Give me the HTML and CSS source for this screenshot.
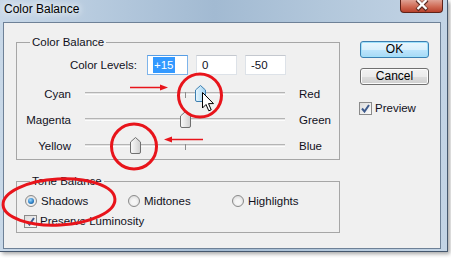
FILE: index.html
```html
<!DOCTYPE html>
<html>

<head>
    <meta charset="utf-8" />
    <title>Color Balance</title>
    <meta name="viewport" content="width=device-width, initial-scale=1">
    <link rel="stylesheet" href="styles.css">
</head>

<body>
    <svg class="defs" width="0" height="0">
        <defs>
            <linearGradient id="thumb-gray" x1="0" y1="0" x2="1" y2="0">
                <stop offset="0" stop-color="#fafafa" />
                <stop offset="0.5" stop-color="#e6e6e6" />
                <stop offset="1" stop-color="#cfcfcf" />
            </linearGradient>
            <linearGradient id="thumb-hot" x1="0" y1="0" x2="1" y2="0">
                <stop offset="0" stop-color="#eaf6fd" />
                <stop offset="0.5" stop-color="#c4e5f8" />
                <stop offset="1" stop-color="#9dcdee" />
            </linearGradient>
        </defs>
    </svg>

    <div class="window">
        <div class="titlebar">
            <div class="title">Color Balance</div>
            <div class="close-btn">
                <svg width="16" height="12" viewBox="0 0 16 12">
                    <path d="M3 0 L13 10 M13 0 L3 10" stroke="#5a2a22" stroke-width="4" />
                    <path d="M3.5 0 L12.5 9 M12.5 0 L3.5 9" stroke="#ffffff" stroke-width="2.4" />
                </svg>
            </div>
        </div>
        <div class="client">
            <div class="left-col">
                <fieldset class="group">
                    <legend>Color Balance</legend>
                    <div class="levels-row">
                        <div class="levels-label">Color Levels:</div>
                        <div class="level-input focused"><span class="selected">+15</span></div>
                        <div class="level-input">0</div>
                        <div class="level-input">-50</div>
                    </div>
                    <div class="sliders">
                        <div class="slider-row">
                            <div class="slider-left">Cyan</div>
                            <div class="track">
                                <div class="tick"></div>
                                <svg class="thumb" style="left: 110px" width="11" height="17" viewBox="0 0 11 17">
                                    <path d="M0.5 5 L5.5 0.5 L10.5 5 V15 Q10.5 16.5 9 16.5 H2 Q0.5 16.5 0.5 15 Z" fill="url(#thumb-hot)" stroke="#3c7fb1" />
                                </svg>
                            </div>
                            <div class="slider-right">Red</div>
                        </div>
                        <div class="slider-row">
                            <div class="slider-left">Magenta</div>
                            <div class="track">
                                <div class="tick"></div>
                                <svg class="thumb" style="left: 95px" width="11" height="17" viewBox="0 0 11 17">
                                    <path d="M0.5 5 L5.5 0.5 L10.5 5 V15 Q10.5 16.5 9 16.5 H2 Q0.5 16.5 0.5 15 Z" fill="url(#thumb-gray)" stroke="#707070" />
                                </svg>
                            </div>
                            <div class="slider-right">Green</div>
                        </div>
                        <div class="slider-row">
                            <div class="slider-left">Yellow</div>
                            <div class="track">
                                <div class="tick"></div>
                                <svg class="thumb" style="left: 45px" width="11" height="17" viewBox="0 0 11 17">
                                    <path d="M0.5 5 L5.5 0.5 L10.5 5 V15 Q10.5 16.5 9 16.5 H2 Q0.5 16.5 0.5 15 Z" fill="url(#thumb-gray)" stroke="#707070" />
                                </svg>
                            </div>
                            <div class="slider-right">Blue</div>
                        </div>
                    </div>
                </fieldset>

                <fieldset class="group tone">
                    <legend>Tone Balance</legend>
                    <div class="radio-row">
                        <div class="radio-item shadows"><span class="radio checked"></span>Shadows</div>
                        <div class="radio-item midtones"><span class="radio"></span>Midtones</div>
                        <div class="radio-item"><span class="radio"></span>Highlights</div>
                    </div>
                    <div class="check-row luminosity">
                        <span class="checkbox">
                            <svg width="9" height="9" viewBox="0 0 9 9"><path d="M1 4.5 L3.5 7.5 L8 1" fill="none" stroke="#3d5a8c" stroke-width="2" /></svg>
                        </span>Preserve Luminosity
                    </div>
                </fieldset>
            </div>

            <div class="right-col">
                <div class="btn btn-default">OK</div>
                <div class="btn">Cancel</div>
                <div class="check-row preview">
                    <span class="checkbox">
                        <svg width="9" height="9" viewBox="0 0 9 9"><path d="M1 4.5 L3.5 7.5 L8 1" fill="none" stroke="#3d5a8c" stroke-width="2" /></svg>
                    </span>Preview
                </div>
            </div>
        </div>
    </div>

    <svg class="cursor" width="13" height="20" viewBox="0 0 13 20">
        <path d="M0.5 0.5 L0.5 16 L4 12.5 L6.8 18.8 L9.2 17.8 L6.5 11.6 L11.5 11.6 Z" fill="#ffffff" stroke="#000000" stroke-width="1" />
    </svg>

    <svg class="marks" width="451" height="258" viewBox="0 0 451 258">
        <g fill="none" stroke="#e8141b" stroke-width="3">
            <circle cx="200" cy="95.5" r="21.5" />
            <circle cx="134" cy="146.5" r="22.5" />
            <ellipse cx="59" cy="202" rx="56" ry="23" transform="rotate(-3 59 202)" />
        </g>
        <g stroke="#e8141b" stroke-width="1.5" fill="#e8141b">
            <line x1="130" y1="87.5" x2="161" y2="87.5" />
            <path d="M168 87.5 L160 84.5 L160 90.5 Z" stroke="none" />
            <line x1="171" y1="139.5" x2="203" y2="139.5" />
            <path d="M164 139.5 L172 136.5 L172 142.5 Z" stroke="none" />
        </g>
    </svg>
</body>

</html>
```

FILE: styles.css
```css
body {
    margin: 0;
    padding: 0;
    width: 451px;
    height: 258px;
    position: relative;
    overflow: hidden;
    background-color: white;
    font-family: "Liberation Sans", Arial, sans-serif;
    font-size: 11.5px;
    color: #10101c;
}

.defs {
    position: absolute;
}

.window {
    width: 448px;
    height: 252px;
    box-sizing: border-box;
    border-right: 1px solid #46586e;
    border-bottom: 1px solid #46586e;
    background: linear-gradient(90deg, #c8d8e8 0%, #b6cade 22%, #a2bad2 48%, #b2c7db 72%, #c3d4e5 100%);
    box-shadow: 2px 2px 4px rgba(0, 0, 0, 0.35);
}

.titlebar {
    height: 22px;
    display: flex;
    justify-content: space-between;
    align-items: flex-start;
}

.title {
    padding: 2px 0 0 4px;
    font-size: 12px;
    line-height: 14px;
    color: #000;
    text-shadow: 0 0 6px #fff, 0 0 10px #fff;
}

.close-btn {
    width: 43px;
    height: 13px;
    margin-right: 4px;
    box-sizing: border-box;
    border: 1px solid #5f2218;
    border-top: none;
    border-radius: 0 0 4px 4px;
    background: linear-gradient(#e0a294, #cf6a54 55%, #b8412c);
    display: flex;
    justify-content: center;
}

.client {
    margin-left: 3px;
    width: 438px;
    height: 227px;
    box-sizing: border-box;
    border: 1px solid #6e8197;
    background-color: #f0f0f0;
    display: flex;
}

.left-col {
    width: 336px;
    box-sizing: border-box;
    padding: 12px 0 0 12px;
}

.group {
    margin: 0;
    padding: 6px 0 0 0;
    width: 324px;
    min-width: 0;
    box-sizing: border-box;
    border: 1px solid #a6a6a6;
}

.group legend {
    margin-left: 13px;
    padding: 0 2px;
    line-height: 14px;
}

.group.tone {
    margin-top: 14px;
    padding-bottom: 4px;
}

.levels-row {
    display: flex;
    align-items: center;
    height: 20px;
}

.levels-label {
    width: 120px;
    margin-right: 10px;
    text-align: right;
}

.level-input {
    width: 41px;
    height: 20px;
    box-sizing: border-box;
    margin-right: 8px;
    padding-left: 5px;
    border: 1px solid #dde2e8;
    border-top-color: #c4c8cf;
    background-color: white;
    line-height: 18px;
}

.level-input.focused {
    border-color: #7eb4ea;
    border-top-color: #569de5;
}

.selected {
    background-color: #3399ff;
    color: white;
    padding: 2px 1px;
}

.sliders {
    margin-top: 6px;
}

.slider-row {
    display: flex;
    align-items: center;
    height: 26px;
}

.slider-left {
    width: 54px;
    margin-right: 14px;
    text-align: right;
}

.track {
    position: relative;
    width: 200px;
    height: 3px;
    box-sizing: border-box;
    margin-top: -2px;
    border-top: 1px solid #b4b4b4;
    border-bottom: 1px solid #fcfcfc;
    background-color: #e4e4e4;
}

.tick {
    position: absolute;
    left: 100px;
    top: -1px;
    width: 1px;
    height: 6px;
    background-color: #8c8c8c;
}

.thumb {
    position: absolute;
    top: -8px;
}

.slider-right {
    margin-left: 14px;
}

.radio-row {
    display: flex;
    align-items: center;
    height: 14px;
    padding-left: 8px;
}

.radio-item {
    display: flex;
    align-items: center;
}

.radio-item.shadows {
    width: 103px;
}

.radio-item.midtones {
    width: 104px;
}

.radio {
    width: 12px;
    height: 12px;
    box-sizing: border-box;
    margin-right: 4px;
    border: 1px solid #8a8a8a;
    border-radius: 50%;
    background: radial-gradient(circle at 50% 60%, #f6f6f6 30%, #d2d2d2 100%);
    display: flex;
    align-items: center;
    justify-content: center;
}

.radio.checked::after {
    content: "";
    width: 6px;
    height: 6px;
    border-radius: 50%;
    background: radial-gradient(circle at 40% 35%, #9ad8ff 0%, #2f82c8 55%, #12416e 100%);
}

.check-row {
    display: flex;
    align-items: center;
    height: 14px;
}

.luminosity {
    margin-top: 6px;
    padding-left: 7px;
}

.checkbox {
    width: 13px;
    height: 13px;
    box-sizing: border-box;
    margin-right: 3px;
    border: 1px solid #8a8a8a;
    background: linear-gradient(135deg, #dcdcdc, #fbfbfb);
    display: flex;
    align-items: center;
    justify-content: center;
}

.right-col {
    padding: 18px 0 0 20px;
}

.btn {
    width: 69px;
    height: 17px;
    box-sizing: border-box;
    border: 1px solid #707070;
    border-radius: 3px;
    background: linear-gradient(#f2f2f2, #ebebeb 50%, #dddddd 50%, #cfcfcf);
    box-shadow: inset 0 0 0 1px #fcfcfc;
    text-align: center;
    line-height: 15px;
    font-size: 12px;
    color: #000;
}

.btn + .btn {
    margin-top: 10px;
}

.btn-default {
    border-color: #3c7fb1;
    background: linear-gradient(#eaf6fd, #d9f0fc 50%, #bee6fd 50%, #a7d9f5);
    box-shadow: inset 0 0 0 1px #9fe1fb;
}

.preview {
    margin-top: 16px;
    margin-left: -1px;
}

.cursor {
    position: absolute;
    left: 202px;
    top: 92px;
}

.marks {
    position: absolute;
    left: 0;
    top: 0;
}
```
